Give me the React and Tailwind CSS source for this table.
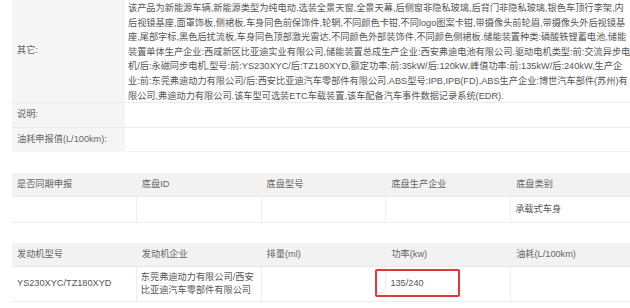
import React from 'react';

const lines = [
  '该产品为新能源车辆,新能源类型为纯电动.选装全景天窗,全景天幕,后侧窗非隐私玻璃,后背门非隐私玻璃,银色车顶行李架,内',
  '后视镜基座,面罩饰板,侧裙板,车身同色前保饰件,轮辋,不同颜色卡钳,不同logo图案卡钳,带摄像头前轮眉,带摄像头外后视镜基',
  '座,尾部字标,黑色后扰流板,车身同色顶部激光雷达,不同颜色外部装饰件,不同颜色侧裙板.储能装置种类:磷酸铁锂蓄电池,储能',
  '装置单体生产企业:西咸新区比亚迪实业有限公司,储能装置总成生产企业:西安弗迪电池有限公司.驱动电机类型:前:交流异步电',
  '机/后:永磁同步电机,型号:前:YS230XYC/后:TZ180XYD,额定功率:前:35kW/后:120kW,峰值功率:前:135kW/后:240kW,生产企',
  '业:前:东莞弗迪动力有限公司/后:西安比亚迪汽车零部件有限公司.ABS型号:IPB,IPB(FD),ABS生产企业:博世汽车部件(苏州)有',
  '限公司,弗迪动力有限公司.该车型可选装ETC车载装置,该车配备汽车事件数据记录系统(EDR).',
];

const font = { fontFamily: '"Liberation Sans", "Noto Sans CJK SC", sans-serif' };

function HeadRow({ cols }) {
  return (
    <div className="grid grid-cols-5 h-[24px] bg-[#f2f2f2] border-b border-[#e8e8e8]">
      {cols.map((c, i) => (
        <div key={i} className="flex items-center px-[5px] text-[#666] whitespace-nowrap">
          {c}
        </div>
      ))}
    </div>
  );
}

export default function App() {
  return (
    <div
      className="w-[630px] h-[308px] overflow-hidden bg-white pl-[12px] text-[9.2px] text-[#555]"
      style={font}
    >
      <div className="w-[624px]">
        {/* 其它 / 说明 / 油耗 */}
        <div className="grid grid-cols-[113px_1fr]">
          <div className="bg-[#f5f5f5] flex items-center px-[5px] text-[#666] h-[103px] border-b border-[#ececec]">
            其它:
          </div>
          <div className="pl-[3px] pt-[1px] leading-[14.6px] h-[103px] border-b border-[#ececec] whitespace-nowrap">
            {lines.map((l, i) => (
              <div key={i}>{l}</div>
            ))}
          </div>
          <div className="bg-[#f5f5f5] flex items-center px-[5px] text-[#666] h-[25px] border-b border-[#ececec]">
            说明:
          </div>
          <div className="h-[25px] border-b border-[#ececec]" />
          <div className="bg-[#f5f5f5] flex items-center px-[5px] text-[#666] h-[24px]">
            油耗申报值(L/100km):
          </div>
          <div className="h-[24px] border-b border-[#f0f0f0]" />
        </div>

        {/* 底盘 */}
        <div className="mt-[21px]">
          <HeadRow cols={['是否同期申报', '底盘ID', '底盘型号', '底盘生产企业', '底盘类别']} />
          <div className="grid grid-cols-5 h-[26px] border-b border-[#ececec]">
            <div className="border-r border-[#eeeeee]" />
            <div className="border-r border-[#eeeeee]" />
            <div className="border-r border-[#eeeeee]" />
            <div className="border-r border-[#eeeeee]" />
            <div className="flex items-center px-[4px]">承载式车身</div>
          </div>
        </div>

        {/* 发动机 */}
        <div className="mt-[20px]">
          <HeadRow cols={['发动机型号', '发动机企业', '排量(ml)', '功率(kw)', '油耗(L/100km)']} />
          <div className="grid grid-cols-5 h-[35px] border-b border-[#ececec]">
            <div className="flex items-center px-[5px] border-r border-[#eeeeee] whitespace-nowrap">
              YS230XYC/TZ180XYD
            </div>
            <div className="flex items-center px-[4px] border-r border-[#eeeeee] leading-[13.5px]">
              东莞弗迪动力有限公司/西安
              <br />
              比亚迪汽车零部件有限公司
            </div>
            <div className="border-r border-[#eeeeee]" />
            <div className="relative flex items-center px-[4px] border-r border-[#eeeeee]">
              135/240
              <div className="absolute left-[-11px] top-[2px] w-[85px] h-[28px] border-2 border-[#e0393b] rounded-[2px]" />
            </div>
            <div />
          </div>
        </div>
      </div>
    </div>
  );
}
